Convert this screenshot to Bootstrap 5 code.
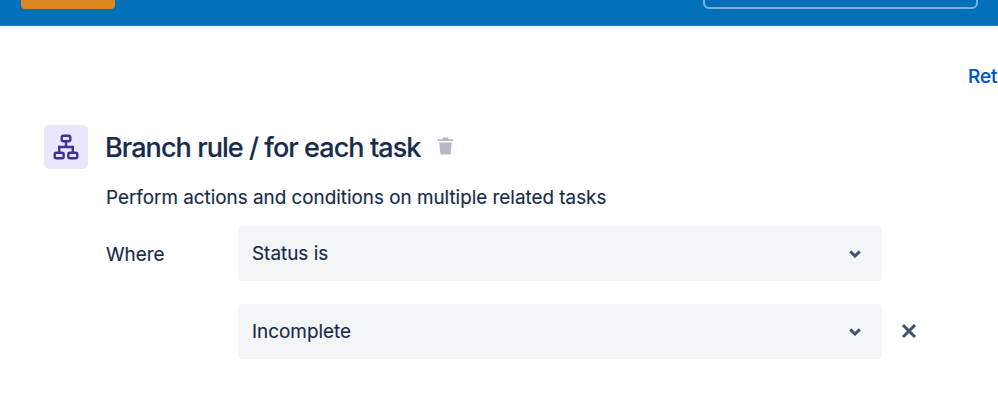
<!DOCTYPE html>
<html lang="en">
<head>
  <meta charset="UTF-8">
  <title>Branch rule</title>
  <link href="https://cdn.jsdelivr.net/npm/bootstrap@5.3.3/dist/css/bootstrap.min.css" rel="stylesheet">
  <style>
    body { font-family: Inter, "Liberation Sans", sans-serif; color: #172b4d; background: #fff; height: 414px; overflow: hidden; -webkit-text-stroke: .15px #172b4d; }
    .topbar { height: 26px; background: #0170b9; border-bottom: 1px solid #2b80c4; box-shadow: 0 3px 3px rgba(9, 30, 66, .05); padding: 0 20px 16px 21px; }
    .create-btn { width: 94px; height: 36px; background: #de8523; border: 0; border-radius: 4px; }
    .search-box { width: 275px; height: 36px; border: 2px solid #7fafd8; border-radius: 6px; }
    .retry-row { padding-top: 37px; height: 99px; }
    .retry-link { color: #0052cc; font-size: 18.9px; font-weight: 500; line-height: 27px; text-decoration: none; width: 30px; overflow: hidden; white-space: nowrap; -webkit-text-stroke: .2px #0052cc; }
    .rule-area { padding-left: 44px; }
    .rule-head { height: 44px; }
    .rule-icon { width: 44px; height: 44px; background: #eae6ff; border-radius: 5px; }
    .rule-title { font-size: 27px; font-weight: 500; line-height: 44px; letter-spacing: -.93px; margin: 1px 0 0 17px; color: #172b4d; }
    .trash-icon { margin-left: 16px; margin-bottom: 2px; }
    .rule-desc { font-size: 18.85px; line-height: 27px; margin: 15px 0 0 62px; }
    .where-label { width: 132px; margin-left: 62px; font-size: 18.9px; line-height: 57px; }
    .select-stack { gap: 23px; margin-top: 15px; }
    .fake-select { width: 644px; height: 55px; background: #f4f5f7; border-radius: 4px; padding: 1px 21px 0 14px; font-size: 18.9px; }
    .remove-btn { background: none; border: 0; padding: 0 0 2px; margin-left: 19px; line-height: 0; }
  </style>
</head>
<body>

<div class="topbar d-flex justify-content-between align-items-end">
  <button class="create-btn flex-shrink-0" type="button"></button>
  <div class="search-box flex-shrink-0"></div>
</div>

<div class="retry-row d-flex justify-content-end">
  <a class="retry-link" href="#">Ret</a>
</div>

<div class="rule-area">
  <div class="rule-head d-flex align-items-center">
    <div class="rule-icon d-flex align-items-center justify-content-center">
      <svg width="26" height="26" viewBox="0 0 26 26" fill="none" stroke="#403294" stroke-width="2.4">
        <rect x="8.7" y="1.7" width="8.6" height="5.6" rx="1.8"/>
        <rect x="1.7" y="18.7" width="9" height="5.6" rx="1.8"/>
        <rect x="15.3" y="18.7" width="9" height="5.6" rx="1.8"/>
        <path d="M13 7.3V13M6.2 18.7V13H19.8V18.7"/>
      </svg>
    </div>
    <h1 class="rule-title">Branch rule / for each task</h1>
    <svg class="trash-icon" width="17" height="18" viewBox="0 0 17 18" fill="#b3b9c6">
      <path d="M6 0.5H11L11.7 2.2H16.2V4H0.8V2.2H5.3Z"/>
      <path d="M2.2 5.5H14.8L13.5 17.5H3.5Z"/>
    </svg>
  </div>

  <p class="rule-desc">Perform actions and conditions on multiple related tasks</p>

  <div class="d-flex">
    <div class="where-label select-stack">Where</div>
    <div class="select-stack d-flex flex-column">
      <div class="fake-select d-flex align-items-center justify-content-between">
        <span>Status is</span>
        <svg width="12" height="8" viewBox="0 0 12 8" fill="none" stroke="#42526e" stroke-width="3"><path d="M1.2 1.4L6 6L10.8 1.4"/></svg>
      </div>
      <div class="d-flex align-items-center">
        <div class="fake-select d-flex align-items-center justify-content-between">
          <span>Incomplete</span>
          <svg width="12" height="8" viewBox="0 0 12 8" fill="none" stroke="#42526e" stroke-width="3"><path d="M1.2 1.4L6 6L10.8 1.4"/></svg>
        </div>
        <button class="remove-btn" type="button" aria-label="Remove">
          <svg width="16" height="16" viewBox="0 0 16 16" fill="none" stroke="#42526e" stroke-width="3"><path d="M2 2L14 14M14 2L2 14"/></svg>
        </button>
      </div>
    </div>
  </div>
</div>

<script src="https://cdn.jsdelivr.net/npm/bootstrap@5.3.3/dist/js/bootstrap.bundle.min.js"></script>
</body>
</html>
